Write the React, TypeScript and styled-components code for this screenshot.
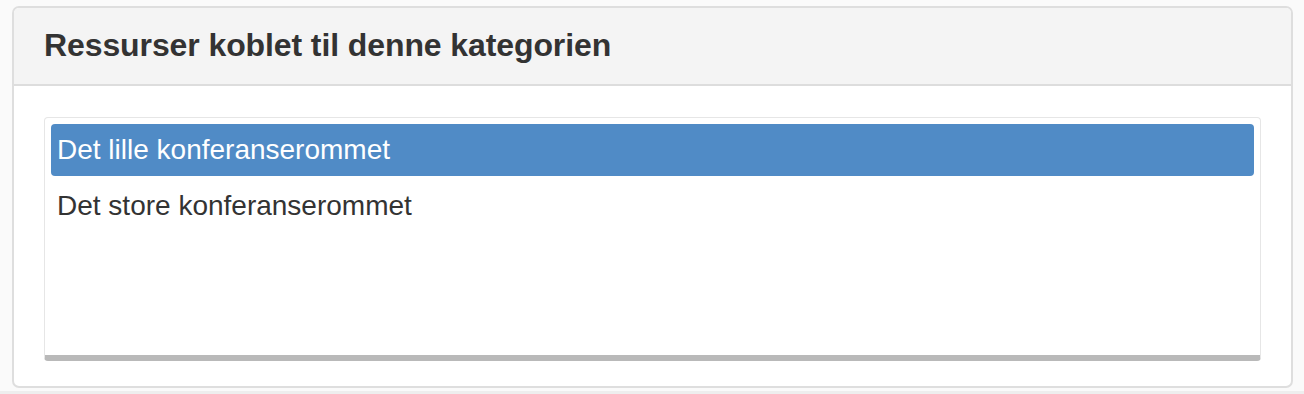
import styled, { createGlobalStyle } from "styled-components";

const GlobalStyle = createGlobalStyle`
  html, body {
    margin: 0;
    padding: 0;
    background: #fafafa;
    font-family: "Liberation Sans", Arial, sans-serif;
    color: #333;
  }
`;

const ressurser = [
  { id: 1, navn: "Det lille konferanserommet", valgt: true },
  { id: 2, navn: "Det store konferanserommet", valgt: false },
];

export default function App() {
  return (
    <>
      <GlobalStyle />
      <PageStl>
        <PanelStl>
          <HeaderStl>
            <TitleStl>Ressurser koblet til denne kategorien</TitleStl>
          </HeaderStl>
          <BodyStl>
            <ListboxStl role="listbox">
              {ressurser.map((r) => (
                <OptionStl key={r.id} $valgt={r.valgt} role="option" aria-selected={r.valgt}>
                  {r.navn}
                </OptionStl>
              ))}
            </ListboxStl>
          </BodyStl>
        </PanelStl>
      </PageStl>
    </>
  );
}

const PageStl = styled.div`
  width: 1304px;
  height: 394px;
  padding: 6px 11px 0 12px;
  box-sizing: border-box;
  border-bottom: 3px solid #eeeeee;
`;

const PanelStl = styled.div`
  box-sizing: border-box;
  height: 382px;
  background: #fff;
  border: 2px solid #dedede;
  border-radius: 7px;
  overflow: hidden;
  display: flex;
  flex-direction: column;
`;

const HeaderStl = styled.div`
  height: 76px;
  background: #f4f4f4;
  border-bottom: 2px solid #dddddd;
  display: flex;
  align-items: center;
  padding: 0 30px;
`;

const TitleStl = styled.h3`
  margin: 0;
  font-size: 32px;
  font-weight: bold;
  color: #333;
  padding-bottom: 2px;
  letter-spacing: -0.1px;
`;

const BodyStl = styled.div`
  flex: 1;
  padding: 31px 30px 25px 30px;
  display: flex;
`;

const ListboxStl = styled.div`
  flex: 1;
  box-sizing: border-box;
  border: 1px solid #e6e6e6;
  border-bottom: 6px solid #b9b9b9;
  border-radius: 4px;
  padding: 6px;
`;

const OptionStl = styled.div<{ $valgt: boolean }>`
  height: 52px;
  display: flex;
  align-items: center;
  padding: 0 6px;
  font-size: 28px;
  border-radius: 4px;
  background: ${(p) => (p.$valgt ? "#508bc6" : "transparent")};
  color: ${(p) => (p.$valgt ? "#fff" : "#333")};
  margin-bottom: 4px;
`;
